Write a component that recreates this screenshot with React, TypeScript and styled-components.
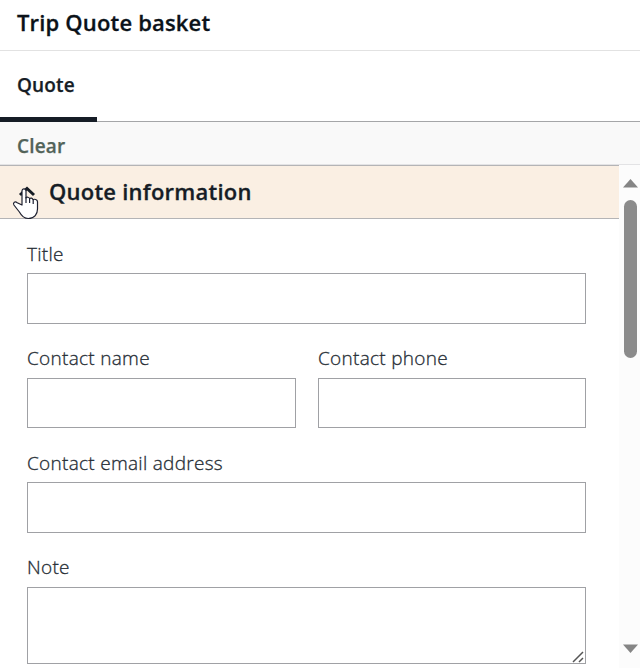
import React from "react";
import styled, { createGlobalStyle } from "styled-components";

const GlobalStyle = createGlobalStyle`
  * { box-sizing: border-box; }
  html, body { margin: 0; overflow: hidden; }
  body { background: #fff; color: #161d26; font-family: "Open Sans", "Noto Sans", sans-serif; }
`;

const Panel = styled.main`
  display: flex;
  flex-direction: column;
  width: 640px;
  height: 668px;
  overflow: hidden;
`;

const Header = styled.header`
  flex: none;
  height: 51px;
  padding: 6px 17px 0;
  border-bottom: 1px solid #e2e2e2;
`;

const PanelTitle = styled.h1`
  margin: 0;
  font-size: 22px;
  line-height: 32px;
  font-weight: 600;
  letter-spacing: 0.170px;
  -webkit-text-stroke: 0.300px currentColor;
  color: #0b1219;
`;

const Tabs = styled.nav`
  flex: none;
  display: flex;
  height: 71px;
  box-shadow: inset 0 -1px #a5a6a8;
`;

const Tab = styled.button`
  width: 97px;
  padding: 1px 0 0 17px;
  border: 0;
  border-bottom: 5px solid #161d26;
  background: transparent;
  color: #161d26;
  font: 600 19px/24px "Open Sans", sans-serif;
  letter-spacing: 0.150px;
  -webkit-text-stroke: 0.250px currentColor;
  text-align: left;
`;

const Toolbar = styled.div`
  flex: none;
  display: flex;
  align-items: center;
  height: 43px;
  padding: 6px 17px 0;
  background: #f9f9f9;
  border-bottom: 1px solid #e3e3e5;
`;

const ClearButton = styled.button`
  padding: 0;
  border: 0;
  background: transparent;
  color: #526359;
  font: 600 19px/24px "Open Sans", sans-serif;
  letter-spacing: 0.150px;
  -webkit-text-stroke: 0.250px currentColor;
`;

const Body = styled.div`
  flex: 1;
  display: flex;
  min-height: 0;
`;

const Content = styled.div`
  width: 619px;
`;

const SectionHeader = styled.div`
  position: relative;
  display: flex;
  align-items: center;
  height: 54px;
  padding-left: 18px;
  background: #faefe3;
  border: solid #b4b4b6;
  border-width: 1px 0;
`;

const Chevron = styled.svg`
  flex: none;
  width: 18px;
  height: 12px;
  margin-right: 13px;
`;

const SectionTitle = styled.h2`
  margin: 0 0 2px;
  font-size: 22px;
  line-height: 32px;
  font-weight: 600;
  letter-spacing: 0.230px;
  -webkit-text-stroke: 0.300px currentColor;
`;

const Pointer = styled.svg`
  position: absolute;
  left: 12px;
  top: 21px;
`;

const Form = styled.form`
  display: grid;
  grid-template-columns: 269px 268px;
  column-gap: 22px;
  padding: 20px 0 0 27px;
`;

const Field = styled.label<{ $wide?: boolean; $gap?: number }>`
  display: flex;
  flex-direction: column;
  grid-column: ${(p) => (p.$wide ? "1 / -1" : "auto")};
  margin-bottom: ${(p) => p.$gap ?? 20}px;
`;

const Caption = styled.span<{ $drop?: boolean }>`
  height: 34px;
  padding-top: ${(p) => (p.$drop ? 1 : 0)}px;
  font-size: 19px;
  line-height: 28px;
  font-weight: 300;
  letter-spacing: 0.290px;
  -webkit-text-stroke: 0.300px currentColor;
  color: #252c34;
`;

const Input = styled.input<{ $height?: number }>`
  width: 100%;
  height: ${(p) => p.$height ?? 51}px;
  border: 1px solid #a0a1a5;
  background: #fff;
  outline: 0;
`;

const NoteBox = styled.div`
  position: relative;
  height: 77px;
`;

const NoteInput = styled.textarea`
  display: block;
  width: 100%;
  height: 100%;
  border: 1px solid #a0a1a5;
  resize: none;
  outline: 0;
`;

const Grip = styled.svg`
  position: absolute;
  right: 2px;
  bottom: 1px;
`;

const Scrollbar = styled.div`
  display: flex;
  flex-direction: column;
  align-items: center;
  width: 21px;
  padding: 14px 0 15px 2px;
  background: #fcfcfc;
`;

const Arrow = styled.svg`
  flex: none;
  width: 15px;
  height: 9px;
`;

const Thumb = styled.div`
  width: 13px;
  height: 158px;
  margin: 12px 0 auto;
  border-radius: 7px;
  background: #8b8b8b;
`;

export default function App() {
  return (
    <>
      <GlobalStyle />
      <Panel>
        <Header>
          <PanelTitle>Trip Quote basket</PanelTitle>
        </Header>
        <Tabs>
          <Tab>Quote</Tab>
        </Tabs>
        <Toolbar>
          <ClearButton>Clear</ClearButton>
        </Toolbar>
        <Body>
          <Content>
            <SectionHeader>
              <Chevron viewBox="0 0 18 12">
                <path d="M2 9 9 2.500 16 9" fill="none" stroke="#161d26" strokeWidth="3" />
              </Chevron>
              <SectionTitle>Quote information</SectionTitle>
              <Pointer width="27" height="33" viewBox="0 0 27 33">
                <path
                  d="M10 18V4.200C10 1 14 1 14 4.200V11c.8-1.300 3.200-1 3.600.7 1-1.100 3-.7 3.400 1 1.300-1 4.500-.2 4.500 2V22c0 5-2.900 9.500-9.200 9.500-4.500 0-7-3-8.900-6.500l-5.500-7c-1.300-2.500 1.200-4 3.300-2.300z"
                  fill="#fff"
                  stroke="#1d2030"
                  strokeWidth="1.200"
                  strokeLinejoin="round"
                />
                <path d="M14 10v6M17.600 11.500V16M21.200 12.500V17" fill="none" stroke="#1d2030" strokeWidth="1.200" />
              </Pointer>
            </SectionHeader>
            <Form>
              <Field $wide>
                <Caption $drop>Title</Caption>
                <Input />
              </Field>
              <Field>
                <Caption>Contact name</Caption>
                <Input $height={50} />
              </Field>
              <Field>
                <Caption>Contact phone</Caption>
                <Input $height={50} />
              </Field>
              <Field $wide>
                <Caption $drop>Contact email address</Caption>
                <Input />
              </Field>
              <Field $wide $gap={0}>
                <Caption>Note</Caption>
                <NoteBox>
                  <NoteInput />
                  <Grip width="12" height="12" viewBox="0 0 12 12">
                    <path d="M1 11 11 1M7 11l4-4" stroke="#555" strokeWidth="1.500" />
                  </Grip>
                </NoteBox>
              </Field>
            </Form>
          </Content>
          <Scrollbar>
            <Arrow viewBox="0 0 15 9">
              <path d="M0 8.500 7.500 0 15 8.500z" fill="#858585" />
            </Arrow>
            <Thumb />
            <Arrow viewBox="0 0 15 9">
              <path d="M0 .5h15L7.500 9z" fill="#858585" />
            </Arrow>
          </Scrollbar>
        </Body>
      </Panel>
    </>
  );
}
